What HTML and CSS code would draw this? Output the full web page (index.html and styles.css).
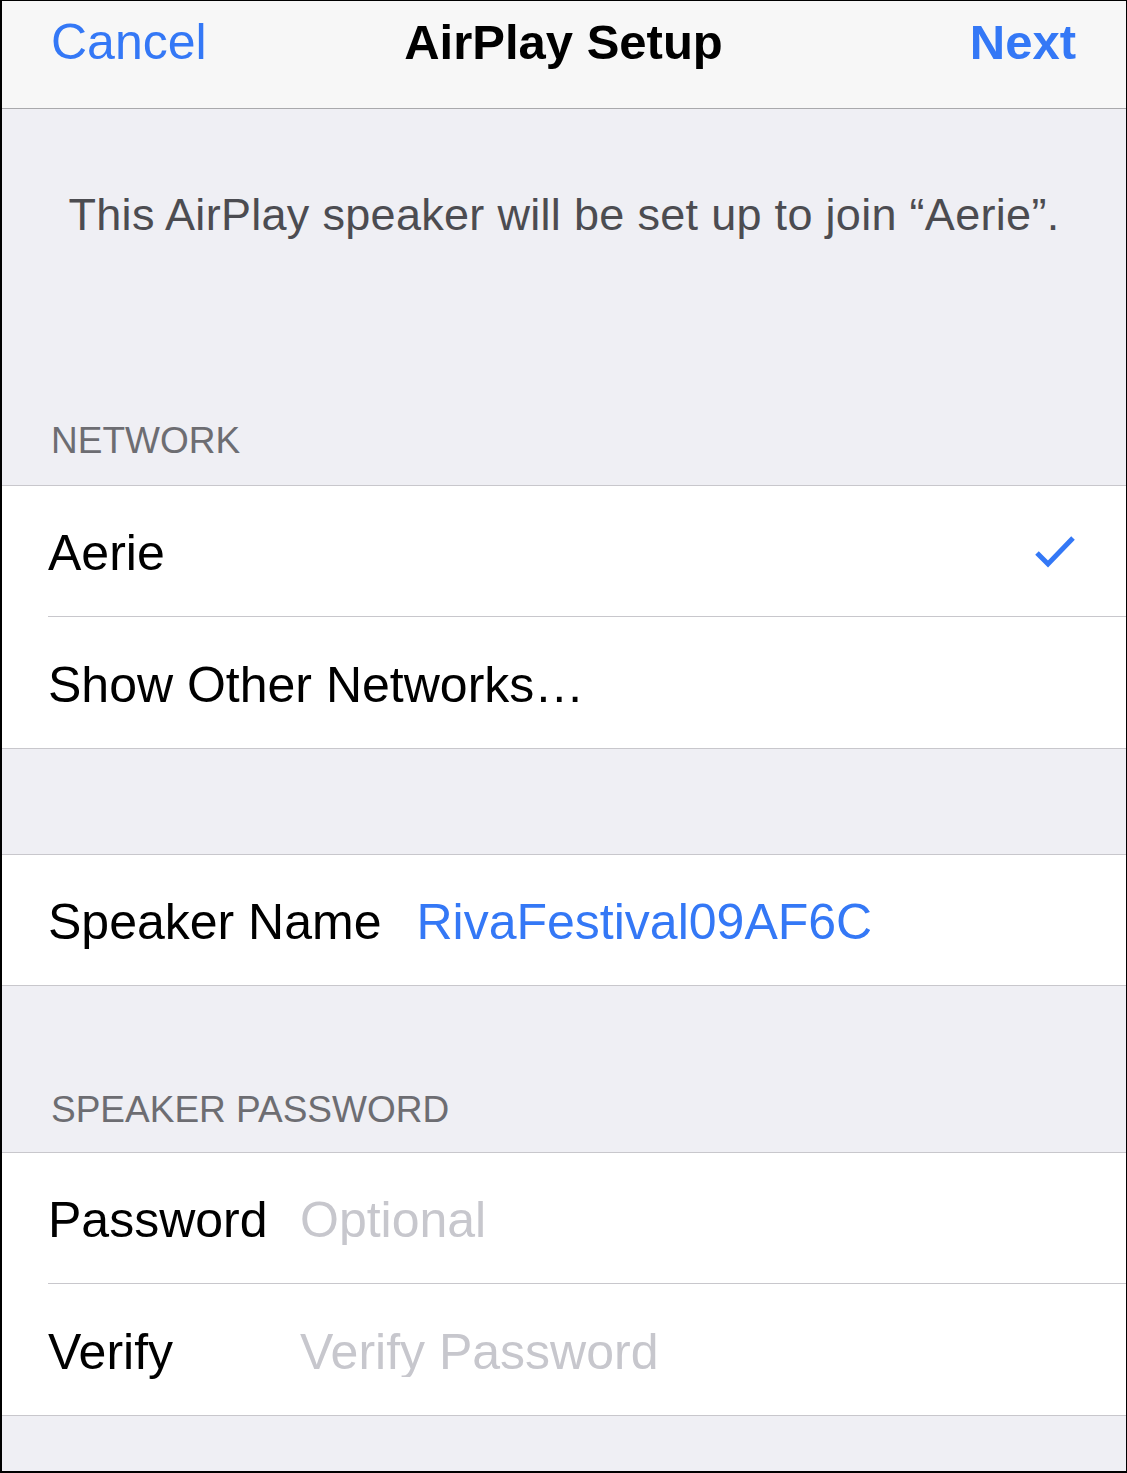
FILE: index.html
```html
<!DOCTYPE html>
<html lang="en">
<head>
  <meta charset="UTF-8" />
  <meta name="viewport" content="width=device-width, initial-scale=1.0"/>
  <title>AirPlay Setup</title>
  <link rel="stylesheet" href="styles.css">
</head>
<body>
<div class="frame">
  <div class="navbar">
    <a class="nav-btn cancel" href="#">Cancel</a>
    <div class="nav-title">AirPlay Setup</div>
    <a class="nav-btn next" href="#">Next</a>
  </div>

  <p class="description">This AirPlay speaker will be set up to join “Aerie”.</p>

  <div class="section-header first">NETWORK</div>
  <div class="group">
    <div class="row">
      <span class="label">Aerie</span>
      <svg class="check" width="42" height="34" viewBox="0 0 42 34">
        <path d="M3 19 L14 30 L39 4" fill="none" stroke="#3478f6" stroke-width="5"/>
      </svg>
    </div>
    <div class="row">
      <span class="label">Show Other Networks…</span>
    </div>
  </div>

  <div class="group spaced">
    <div class="row">
      <span class="label">Speaker Name</span>
      <span class="value">RivaFestival09AF6C</span>
    </div>
  </div>

  <div class="section-header">SPEAKER PASSWORD</div>
  <form class="group" id="password-form">
    <div class="row field">
      <label for="password" class="label">Password</label>
      <input type="password" id="password" name="password" placeholder="Optional">
    </div>
    <div class="row field">
      <label for="verify" class="label">Verify</label>
      <input type="password" id="verify" name="verify" placeholder="Verify Password">
    </div>
  </form>
</div>
</body>
</html>
```

FILE: styles.css
```css
* {
  box-sizing: border-box;
}
body {
  margin: 0;
  padding: 0;
  font-family: "Liberation Sans", Arial, sans-serif;
  background-color: #000;
}
.frame {
  min-height: 100vh;
  background-color: #efeff4;
  border-style: solid;
  border-color: #000;
  border-width: 1px 1px 2px 2px;
}
.navbar {
  display: grid;
  grid-template-columns: 1fr auto 1fr;
  align-items: baseline;
  height: 108px;
  padding: 16px 50px 0 49px;
  background-color: #f7f7f7;
  border-bottom: 1px solid #a9a9ac;
}
.nav-btn {
  font-size: 50px;
  line-height: 1;
  color: #3478f6;
  text-decoration: none;
}
.nav-btn.next {
  justify-self: end;
  font-size: 49px;
  font-weight: bold;
}
.nav-title {
  font-size: 49px;
  line-height: 1;
  font-weight: bold;
  color: #000;
}
.description {
  margin: 83px 0 0 0;
  font-size: 45px;
  line-height: 1;
  letter-spacing: 0.3px;
  text-align: center;
  color: #4c4c51;
}
.section-header {
  margin: 105px 0 24px 0;
  padding-left: 49px;
  font-size: 37px;
  line-height: 1;
  color: #6d6d72;
}
.section-header.first {
  margin-top: 185px;
  margin-bottom: 26px;
}
.group {
  margin: 0;
  background-color: #fff;
  border-top: 1px solid #c8c7cc;
  border-bottom: 1px solid #c8c7cc;
}
.group.spaced {
  margin-top: 105px;
}
.row {
  display: flex;
  align-items: center;
  height: 130px;
  margin-left: 46px;
  padding: 4px 50px 0 0;
  font-size: 50px;
  color: #000;
}
.row + .row {
  height: 132px;
  border-top: 1px solid #c8c7cc;
}
.label {
  line-height: 1;
}
.value {
  margin-left: 35px;
  line-height: 1;
  color: #3478f6;
}
.check {
  margin-left: auto;
  margin-top: -4px;
}
.field .label {
  width: 252px;
  flex-shrink: 0;
}
.field input {
  flex: 1;
  height: 50px;
  padding: 0;
  border: none;
  outline: none;
  background: transparent;
  font-family: inherit;
  font-size: 50px;
  color: #000;
}
.field input::placeholder {
  color: #c7c7cd;
}
```
